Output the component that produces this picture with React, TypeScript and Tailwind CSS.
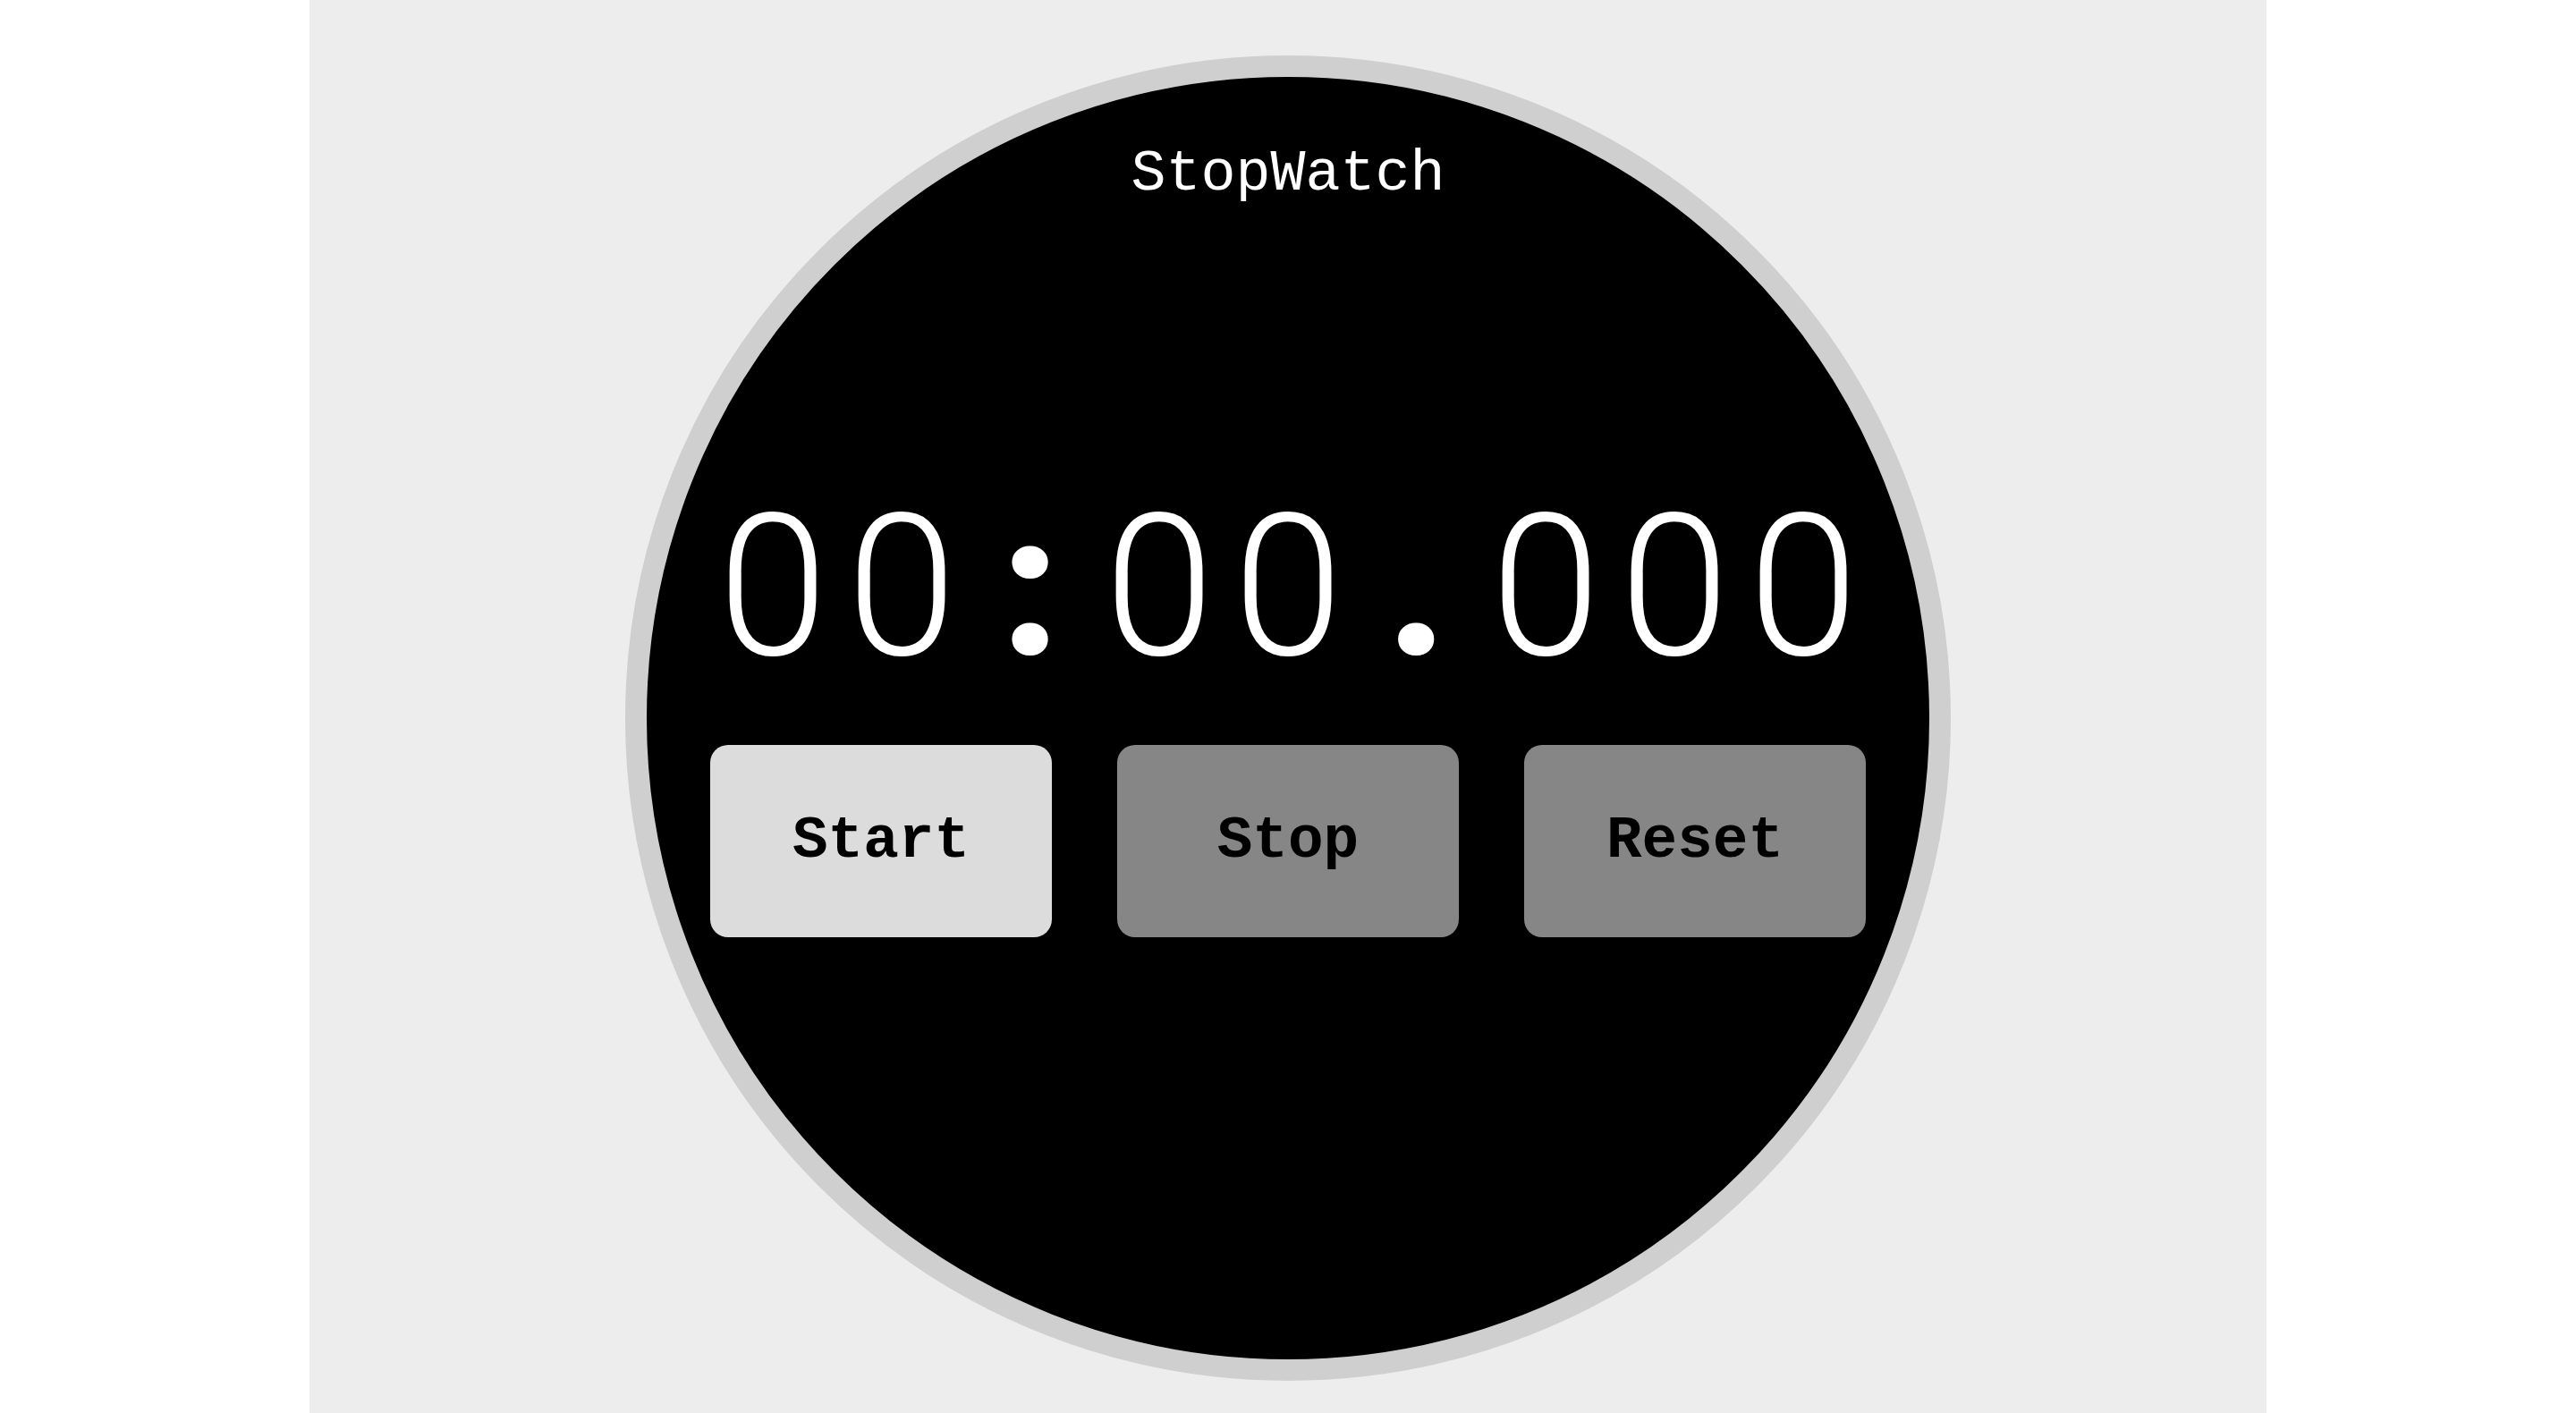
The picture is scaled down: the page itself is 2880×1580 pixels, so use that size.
import React from "react";

const chars = ["0", "0", ":", "0", "0", ".", "0", "0", "0"];

export default function App() {
  return (
    <div className="w-full h-[1580px] bg-white overflow-hidden">
      <div className="mx-auto w-[76%] h-[1580px] bg-[#ededed] flex justify-center pt-[62px]">
        <div className="w-[1482px] h-[1482px] rounded-full border-[24px] border-[#cfcfcf] bg-black flex flex-col items-center pt-[77px] font-['Liberation_Mono','Courier_New',monospace]">
          <div className="text-[65px] leading-[65px] text-white">StopWatch</div>
          <div className="mt-[309px] flex text-white font-['Roboto',sans-serif] text-[221px] leading-[240px]">
            {chars.map((c, i) =>
              c === "0" ? (
                <span key={i} className="w-[144px] text-center font-light">
                  {c}
                </span>
              ) : (
                <span key={i} className="w-[144px] text-center font-black">
                  {c}
                </span>
              )
            )}
          </div>
          <div className="mt-[56px] flex gap-[73px]">
            <button className="w-[382px] h-[215px] rounded-[20px] bg-[#dcdcdc] text-black text-[66px] font-bold font-['Liberation_Mono','Courier_New',monospace]">
              Start
            </button>
            <button className="w-[382px] h-[215px] rounded-[20px] bg-[#868686] text-black text-[66px] font-bold font-['Liberation_Mono','Courier_New',monospace]">
              Stop
            </button>
            <button className="w-[382px] h-[215px] rounded-[20px] bg-[#868686] text-black text-[66px] font-bold font-['Liberation_Mono','Courier_New',monospace]">
              Reset
            </button>
          </div>
        </div>
      </div>
    </div>
  );
}
